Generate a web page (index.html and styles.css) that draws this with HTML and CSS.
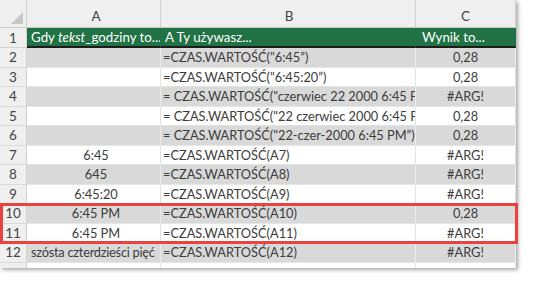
FILE: index.html
```html
<!DOCTYPE html>
<html lang="pl">
<head>
<meta charset="utf-8">
<link rel="stylesheet" href="styles.css">
</head>
<body>
<div class="wrap">
  <div class="sheet">
    <div class="row colhead">
      <div class="rn corner"><span class="tri"></span></div>
      <div class="c ca ch">A</div>
      <div class="c cb ch">B</div>
      <div class="c cc ch">C</div>
    </div>
    <div class="row title">
      <div class="rn">1</div>
      <div class="c ca"><span>Gdy <i>tekst</i>_godziny to...</span></div>
      <div class="c cb">A Ty używasz...</div>
      <div class="c cc left">Wynik to...</div>
    </div>
    <div class="row g">
      <div class="rn">2</div>
      <div class="c ca ctr"></div>
      <div class="c cb">=CZAS.WARTOŚĆ("6:45”)</div>
      <div class="c cc ctr">0,28</div>
    </div>
    <div class="row w">
      <div class="rn">3</div>
      <div class="c ca ctr"></div>
      <div class="c cb">=CZAS.WARTOŚĆ("6:45:20”)</div>
      <div class="c cc ctr">0,28</div>
    </div>
    <div class="row g">
      <div class="rn">4</div>
      <div class="c ca ctr"></div>
      <div class="c cb">= CZAS.WARTOŚĆ("czerwiec 22 2000 6:45 PM”)</div>
      <div class="c cc ctr">#ARG!</div>
    </div>
    <div class="row w">
      <div class="rn">5</div>
      <div class="c ca ctr"></div>
      <div class="c cb">= CZAS.WARTOŚĆ("22 czerwiec 2000 6:45 PM”)</div>
      <div class="c cc ctr">0,28</div>
    </div>
    <div class="row g">
      <div class="rn">6</div>
      <div class="c ca ctr"></div>
      <div class="c cb">= CZAS.WARTOŚĆ("22-czer-2000 6:45 PM”)</div>
      <div class="c cc ctr">0,28</div>
    </div>
    <div class="row w">
      <div class="rn">7</div>
      <div class="c ca ctr">6:45</div>
      <div class="c cb">=CZAS.WARTOŚĆ(A7)</div>
      <div class="c cc ctr">#ARG!</div>
    </div>
    <div class="row g">
      <div class="rn">8</div>
      <div class="c ca ctr">645</div>
      <div class="c cb">=CZAS.WARTOŚĆ(A8)</div>
      <div class="c cc ctr">#ARG!</div>
    </div>
    <div class="row w">
      <div class="rn">9</div>
      <div class="c ca ctr">6:45:20</div>
      <div class="c cb">=CZAS.WARTOŚĆ(A9)</div>
      <div class="c cc ctr">#ARG!</div>
    </div>
    <div class="row g">
      <div class="rn">10</div>
      <div class="c ca ctr">6:45 PM</div>
      <div class="c cb">=CZAS.WARTOŚĆ(A10)</div>
      <div class="c cc ctr">0,28</div>
    </div>
    <div class="row w">
      <div class="rn">11</div>
      <div class="c ca ctr">6:45 PM</div>
      <div class="c cb">=CZAS.WARTOŚĆ(A11)</div>
      <div class="c cc ctr">#ARG!</div>
    </div>
    <div class="row g">
      <div class="rn">12</div>
      <div class="c ca tight">szósta czterdzieści pięć</div>
      <div class="c cb">=CZAS.WARTOŚĆ(A12)</div>
      <div class="c cc ctr">#ARG!</div>
    </div>
    <div class="row w part">
      <div class="rn"></div>
      <div class="c ca"></div>
      <div class="c cb"></div>
      <div class="c cc"></div>
    </div>
  </div>
  <div class="hl"></div>
</div>
</body>
</html>
```
FILE: styles.css
```css
html, body {
  margin: 0;
  padding: 0;
  background: #ffffff;
}
body {
  font-family: Lato, "Open Sans", sans-serif;
  font-size: 12.8px;
  color: #3c3c3c;
}
.wrap {
  position: relative;
  width: 535px;
  height: 284px;
}
.sheet {
  width: 516px;
  height: 268px;
  overflow: hidden;
  background: #fff;
  box-shadow: 2px 2px 4px rgba(0, 0, 0, 0.35);
}
.row {
  display: grid;
  grid-template-columns: 27px 134px 255px 100px;
  height: 19.5px;
}
.rn, .c {
  box-sizing: border-box;
  border-right: 1px solid #e2e2e2;
  border-bottom: 1px solid #e2e2e2;
  display: flex;
  align-items: center;
  white-space: nowrap;
  overflow: hidden;
}
.rn {
  background: #efefef;
  border-right-color: #d2d2d2;
  border-bottom-color: #dadada;
  justify-content: center;
  color: #444;
  font-size: 13.5px;
}
.c {
  padding-left: 3px;
}
.ctr {
  justify-content: center;
  padding-left: 0;
}
.colhead {
  height: 28px;
}
.colhead .c, .colhead .rn {
  background: #efefef;
  border-right-color: #d2d2d2;
  border-bottom-color: #c8c8c8;
}
.ch {
  justify-content: center;
  padding: 4px 0 0;
  color: #444;
  font-size: 13.5px;
}
.corner {
  position: relative;
}
.tri {
  position: absolute;
  right: 3px;
  bottom: 3px;
  width: 0;
  height: 0;
  border-left: 12px solid transparent;
  border-bottom: 12px solid #c6c6c6;
}
.title {
  height: 20px;
}
.title .c {
  background: #217346;
  color: #fff;
  border-right-color: #217346;
  border-bottom: 2px solid #1c1c1c;
  padding-left: 4px;
  font-size: 13.3px;
}
.title .c.cc {
  padding-left: 6px;
}
.title .rn {
  border-bottom-color: #d2d2d2;
}
.g .c {
  background: #d9d9d9;
  border-right-color: #ececec;
  border-bottom-color: #e6e6e6;
}
.w .c {
  background: #fff;
}
.ca {
  padding-left: 5px;
}
.ca.tight {
  padding-left: 4px;
  letter-spacing: -0.25px;
}
.cb {
  padding-left: 2px;
}
.part {
  height: 8px;
}
.hl {
  position: absolute;
  left: 0;
  top: 203px;
  width: 518px;
  height: 41px;
  box-sizing: border-box;
  border: 3px solid #e8433e;
}
```
